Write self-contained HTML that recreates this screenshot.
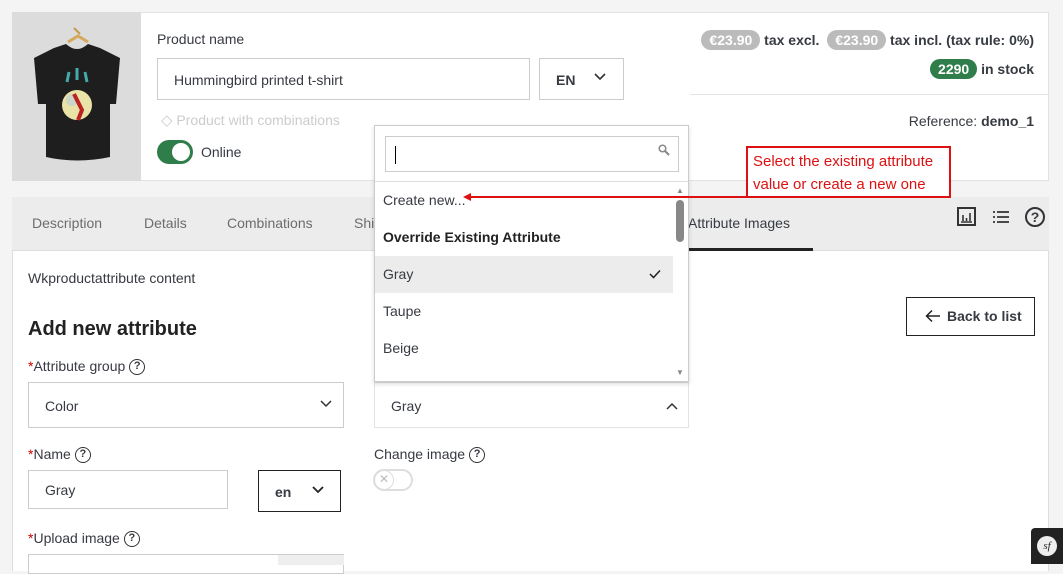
<!DOCTYPE html>
<html><head><meta charset="utf-8"><style>
*{box-sizing:border-box;margin:0;padding:0}
body{width:1063px;height:564px;overflow:hidden;background:#f4f4f4;font-family:"Liberation Sans",sans-serif;font-size:14px;color:#363a41;position:relative}
.a{position:absolute}
.box{position:absolute;border:1px solid #ddd;background:#fff}
.pill{display:inline-block;border-radius:10px;padding:0 8px;height:20px;line-height:20px;color:#fff;font-weight:bold;font-size:14px}
.q{display:inline-block;width:16px;height:16px;border:1.5px solid #333;border-radius:50%;font-size:11px;line-height:13px;text-align:center;font-weight:bold;vertical-align:middle;margin-left:4px}
.lbl{font-size:14px;color:#363a41}
.red{color:#c00}
.chev{position:absolute}
</style></head><body>
<div class="a" style="left:12px;top:12px;width:1037px;height:169px;background:#fff;border:1px solid #e2e2e2"></div>
<div class="a" style="left:12px;top:12px;width:129px;height:169px;background:#dcdcdc">
<svg width="129" height="169" viewBox="0 0 129 169"><path d="M62 16 L68 22" stroke="#c89a4a" stroke-width="2"/><path d="M56 30 L66 24 L76 30" stroke="#d6a85a" stroke-width="3" fill="none"/><path d="M42 36 L54 32 Q65 42 76 32 L88 36 L108 46 L104 92 L98 92 L98 145 Q65 152 34 145 L34 92 L26 92 L22 46 Z" fill="#1e1e1e"/><circle cx="65" cy="93" r="15" fill="#e9e3a8"/><circle cx="60" cy="88" r="6" fill="#bcd" opacity=".6"/><path d="M62 82 L70 98 L66 108" stroke="#b22" stroke-width="4" fill="none"/><path d="M55 70 L57 60 M65 68 L65 56 M75 70 L73 60" stroke="#4aa" stroke-width="3"/></svg></div>
<div class="a lbl" style="left:157px;top:31px">Product name</div>
<div class="box" style="left:157px;top:58px;width:373px;height:42px;border-color:#ccc;padding:13px 16px">Hummingbird printed t-shirt</div>
<div class="box" style="left:539px;top:58px;width:85px;height:42px;border-color:#ccc;padding:13px 16px;font-weight:bold">EN</div>
<svg class="chev" style="left:594px;top:73px" width="12" height="8" viewBox="0 0 12 8"><path d="M1 1 L6 6 L11 1" stroke="#333" stroke-width="1.6" fill="none"/></svg>
<div class="a" style="left:161px;top:111px;color:#ccc"><span style="font-size:15px">◇</span> Product with combinations</div>
<div class="a" style="left:157px;top:140px;width:36px;height:24px;border-radius:12px;background:#2f7d4a"><div style="position:absolute;right:3px;top:3px;width:18px;height:18px;border-radius:50%;background:#fff"></div></div>
<div class="a" style="left:201px;top:144px">Online</div>
<div class="a" style="right:29px;top:30px;font-weight:bold;font-size:14px"><span class="pill" style="background:#bbb">€23.90</span> tax excl. <span class="pill" style="background:#bbb;margin-left:4px">€23.90</span> tax incl. (tax rule: 0%)</div>
<div class="a" style="right:29px;top:59px;font-weight:bold"><span class="pill" style="background:#2f7d4a">2290</span> in stock</div>
<div class="a" style="left:690px;top:94px;width:359px;height:1px;background:#e5e5e5"></div>
<div class="a" style="right:29px;top:113px">Reference: <b>demo_1</b></div>
<div class="a" style="left:12px;top:197px;width:1037px;height:54px;background:#ececec;border-bottom:1px solid #ddd"></div>
<div class="a" style="left:32px;top:215px;color:#6c6c6c">Description</div>
<div class="a" style="left:144px;top:215px;color:#6c6c6c">Details</div>
<div class="a" style="left:227px;top:215px;color:#6c6c6c">Combinations</div>
<div class="a" style="left:354px;top:215px;color:#6c6c6c">Shi</div>
<div class="a" style="left:688px;top:215px;color:#363a41">Attribute Images</div>
<div class="a" style="left:688px;top:248px;width:125px;height:3px;background:#222"></div>
<svg class="chev" style="left:957px;top:207px" width="20" height="20" viewBox="0 0 20 20"><rect x="1" y="1" width="17" height="17" fill="none" stroke="#333" stroke-width="2"/><path d="M6 8v6M9.5 11v3M13 6v8M4 15h11" stroke="#333" stroke-width="1.6"/></svg>
<svg class="chev" style="left:992px;top:210px" width="18" height="14" viewBox="0 0 18 14"><path d="M1 2h2M5 2h12M1 7h2M5 7h12M1 12h2M5 12h12" stroke="#333" stroke-width="1.8"/></svg>
<div class="a" style="left:1025px;top:207px;width:20px;height:20px;border:2px solid #333;border-radius:50%;text-align:center;font-weight:bold;line-height:16px">?</div>
<div class="a" style="left:12px;top:251px;width:1037px;height:320px;background:#fff;border-left:1px solid #ddd;border-right:1px solid #ddd"></div>
<div class="a" style="left:28px;top:270px">Wkproductattribute content</div>
<div class="a" style="left:28px;top:318px;font-size:20px;font-weight:bold;color:#222">Add new attribute</div>
<div class="a" style="left:906px;top:297px;width:129px;height:39px;border:1.5px solid #222;padding:10px 0 0 40px;font-weight:bold">Back to list</div>
<svg class="chev" style="left:925px;top:309px" width="16" height="14" viewBox="0 0 16 14"><path d="M15 7H2M7 1.5L1.5 7L7 12.5" stroke="#222" stroke-width="1.5" fill="none"/></svg>
<div class="a" style="left:28px;top:358px"><span class="red">*</span>Attribute group<span class="q">?</span></div>
<div class="box" style="left:28px;top:382px;width:316px;height:46px;border-color:#ccc;padding:15px 16px">Color</div>
<svg class="chev" style="left:320px;top:400px" width="12" height="8" viewBox="0 0 12 8"><path d="M1 1 L6 6 L11 1" stroke="#333" stroke-width="1.5" fill="none"/></svg>
<div class="box" style="left:374px;top:382px;width:315px;height:46px;border-color:#e3e3e3;padding:15px 16px">Gray</div>
<svg class="chev" style="left:666px;top:402px" width="12" height="8" viewBox="0 0 12 8"><path d="M1 7 L6 2 L11 7" stroke="#333" stroke-width="1.5" fill="none"/></svg>
<div class="a" style="left:28px;top:446px"><span class="red">*</span>Name<span class="q">?</span></div>
<div class="box" style="left:28px;top:470px;width:200px;height:39px;border-color:#ccc;padding:11px 16px">Gray</div>
<div class="a" style="left:258px;top:470px;width:83px;height:42px;border:1.5px solid #222;padding:13px 16px;font-weight:bold">en</div>
<svg class="chev" style="left:312px;top:486px" width="12" height="8" viewBox="0 0 12 8"><path d="M1 1 L6 6 L11 1" stroke="#222" stroke-width="1.8" fill="none"/></svg>
<div class="a" style="left:374px;top:446px">Change image<span class="q">?</span></div>
<div class="a" style="left:373px;top:469px;width:40px;height:22px;border:2px solid #ddd;border-radius:11px"><div style="position:absolute;left:-1px;top:-1px;width:20px;height:20px;border:1.5px solid #ddd;border-radius:50%;text-align:center;color:#bbb;font-size:12px;line-height:17px">✕</div></div>
<div class="a" style="left:28px;top:530px"><span class="red">*</span>Upload image<span class="q">?</span></div>
<div class="box" style="left:28px;top:554px;width:316px;height:20px;border-color:#ccc"></div>
<div class="a" style="left:278px;top:555px;width:66px;height:10px;background:#eee"></div>
<div class="box" style="left:374px;top:125px;width:315px;height:257px;border-color:#ccc;box-shadow:0 2px 4px rgba(0,0,0,.15)">
<div class="a" style="left:10px;top:10px;width:294px;height:36px;border:1px solid #ccc"><div style="position:absolute;left:9px;top:9px;width:1px;height:18px;background:#000"></div>
<svg style="position:absolute;right:8px;top:7px" width="12" height="12" viewBox="0 0 12 12"><circle cx="4.5" cy="4.5" r="3.3" stroke="#888" stroke-width="1.5" fill="none"/><path d="M7 7L11 11" stroke="#888" stroke-width="2"/></svg></div>
<div class="a" style="left:0;top:55px;width:313px;height:1px;background:#ddd"></div>
<div class="a" style="left:8px;top:66px">Create new...</div>
<div class="a" style="left:8px;top:103px;font-weight:bold;color:#222">Override Existing Attribute</div>
<div class="a" style="left:0;top:130px;width:298px;height:37px;background:#ececec"></div>
<div class="a" style="left:8px;top:140px">Gray</div>
<svg class="chev" style="left:274px;top:143px" width="12" height="10" viewBox="0 0 12 10"><path d="M1 5L4.5 8.5L11 1.5" stroke="#222" stroke-width="1.5" fill="none"/></svg>
<div class="a" style="left:8px;top:177px">Taupe</div>
<div class="a" style="left:8px;top:214px">Beige</div>
<div class="a" style="left:301px;top:74px;width:8px;height:42px;border-radius:4px;background:#888"></div>
<div class="a" style="left:301px;top:60px;font-size:8px;color:#888">▲</div>
<div class="a" style="left:301px;top:242px;font-size:8px;color:#888">▼</div>
</div>
<div class="a" style="left:466px;top:196px;width:280px;height:2px;background:#d11"></div>
<div class="a" style="left:463px;top:193px;width:0;height:0;border-top:4px solid transparent;border-bottom:4px solid transparent;border-right:8px solid #d11"></div>
<div class="a" style="left:746px;top:146px;width:205px;height:52px;border:2px solid #d11;background:#fff;color:#d11;font-size:15px;line-height:23px;padding:2px 5px">Select the existing attribute value or create a new one</div>
<div class="a" style="left:1031px;top:528px;width:32px;height:36px;background:#222;border-radius:4px 0 0 0"><div style="position:absolute;left:6px;top:8px;width:20px;height:20px;border-radius:50%;background:#eee;color:#222;font-size:11px;text-align:center;line-height:20px;font-style:italic;font-family:'Liberation Serif',serif">sf</div></div>
</body></html>
